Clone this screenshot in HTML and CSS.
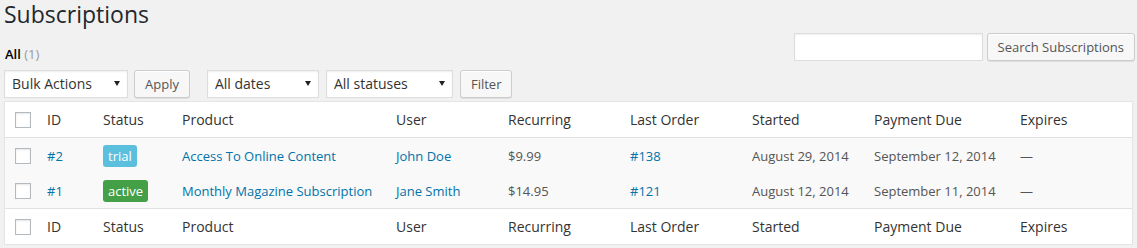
FILE: index.html
```html
<!DOCTYPE html>
<html lang="en">
  <head>
    <meta charset="UTF-8" />
    <title>Subscriptions</title>
    <link rel="stylesheet" href="styles.css">
  </head>
  <body>
    <div class="wrap">
      <h1>Subscriptions</h1>

      <div class="top-row">
        <ul class="subsubsub">
          <li><a href="#" class="current">All <span class="count">(1)</span></a></li>
        </ul>
        <div class="search-box">
          <input type="search" class="search-input" />
          <button class="button">Search Subscriptions</button>
        </div>
      </div>

      <div class="tablenav">
        <div class="actions bulk">
          <label class="select-wrap w-bulk">
            <select><option>Bulk Actions</option></select>
          </label>
          <button class="button">Apply</button>
        </div>
        <div class="actions filters">
          <label class="select-wrap w-dates">
            <select><option>All dates</option></select>
          </label>
          <label class="select-wrap w-status">
            <select><option>All statuses</option></select>
          </label>
          <button class="button">Filter</button>
        </div>
      </div>

      <table class="list-table">
        <colgroup>
          <col class="c-cb" />
          <col class="c-id" />
          <col class="c-status" />
          <col class="c-product" />
          <col class="c-user" />
          <col class="c-recurring" />
          <col class="c-order" />
          <col class="c-started" />
          <col class="c-due" />
          <col />
        </colgroup>
        <thead>
          <tr>
            <th><span class="checkbox"></span></th>
            <th>ID</th>
            <th>Status</th>
            <th>Product</th>
            <th>User</th>
            <th>Recurring</th>
            <th>Last Order</th>
            <th>Started</th>
            <th>Payment Due</th>
            <th>Expires</th>
          </tr>
        </thead>
        <tbody>
          <tr>
            <td><span class="checkbox"></span></td>
            <td><a href="#">#2</a></td>
            <td><span class="badge trial">trial</span></td>
            <td><a href="#">Access To Online Content</a></td>
            <td><a href="#">John Doe</a></td>
            <td>$9.99</td>
            <td><a href="#">#138</a></td>
            <td>August 29, 2014</td>
            <td>September 12, 2014</td>
            <td>&mdash;</td>
          </tr>
          <tr>
            <td><span class="checkbox"></span></td>
            <td><a href="#">#1</a></td>
            <td><span class="badge active">active</span></td>
            <td><a href="#">Monthly Magazine Subscription</a></td>
            <td><a href="#">Jane Smith</a></td>
            <td>$14.95</td>
            <td><a href="#">#121</a></td>
            <td>August 12, 2014</td>
            <td>September 11, 2014</td>
            <td>&mdash;</td>
          </tr>
        </tbody>
        <tfoot>
          <tr>
            <th><span class="checkbox"></span></th>
            <th>ID</th>
            <th>Status</th>
            <th>Product</th>
            <th>User</th>
            <th>Recurring</th>
            <th>Last Order</th>
            <th>Started</th>
            <th>Payment Due</th>
            <th>Expires</th>
          </tr>
        </tfoot>
      </table>
    </div>
  </body>
</html>
```

FILE: styles.css
```css
/* Page */
body {
  margin: 0;
  background-color: #f1f1f1;
  font-family: "Open Sans", sans-serif;
  font-size: 13px;
  color: #444;
}

.wrap {
  padding: 0 4px;
  width: 1129px;
}

h1 {
  margin: 0;
  padding: 0;
  font-size: 23px;
  font-weight: 400;
  line-height: 29px;
  color: #23282d;
}

/* Views + search */
.top-row {
  display: flex;
  justify-content: space-between;
  align-items: flex-start;
  margin-top: 4px;
}

.subsubsub {
  list-style: none;
  margin: 11px 0 0 1px;
  padding: 0;
  line-height: 20px;
}

.subsubsub a {
  text-decoration: none;
  color: #000;
  font-weight: 600;
}

.subsubsub .count {
  color: #999;
  font-weight: 400;
}

.search-box {
  display: flex;
  gap: 4px;
  margin-right: -2px;
}

.search-input {
  width: 189px;
  height: 28px;
  box-sizing: border-box;
  margin: 0;
  border: 1px solid #ddd;
  background: #fff;
  box-shadow: inset 0 1px 2px rgba(0, 0, 0, 0.07);
}

/* Buttons */
.button {
  height: 28px;
  box-sizing: border-box;
  margin: 0;
  padding: 0 10px 1px;
  font-family: "Open Sans", sans-serif;
  font-size: 13px;
  color: #555;
  background: #f7f7f7;
  border: 1px solid #ccc;
  border-radius: 3px;
  box-shadow: inset 0 1px 0 #fff, 0 1px 0 rgba(0, 0, 0, 0.08);
  cursor: pointer;
}

/* Filters row */
.tablenav {
  display: flex;
  align-items: center;
  margin-top: 6px;
  height: 28px;
}

.actions {
  display: flex;
  gap: 6px;
}

.filters {
  margin-left: 17px;
  gap: 7px;
}

.select-wrap {
  position: relative;
  display: block;
  height: 28px;
}

.select-wrap::after {
  content: "";
  position: absolute;
  right: 8px;
  top: 11px;
  border-left: 3px solid transparent;
  border-right: 3px solid transparent;
  border-top: 5px solid #222;
  pointer-events: none;
}

.select-wrap select {
  appearance: none;
  -webkit-appearance: none;
  width: 100%;
  height: 28px;
  margin: 0;
  padding: 0 20px 1px 7px;
  font-family: "Open Sans", sans-serif;
  font-size: 14px;
  color: #333;
  background: #fff;
  border: 1px solid #ddd;
  border-radius: 0;
  box-shadow: inset 0 1px 2px rgba(0, 0, 0, 0.07);
}

.w-bulk { width: 124px; }
.w-dates { width: 112px; }
.w-status { width: 127px; }

/* Table */
.list-table {
  width: 1129px;
  margin-top: 3px;
  table-layout: fixed;
  border-collapse: separate;
  border-spacing: 0;
  background: #fff;
  border: 1px solid #e5e5e5;
  box-shadow: 0 1px 1px rgba(0, 0, 0, 0.04);
}

.c-cb { width: 32px; }
.c-id { width: 56px; }
.c-status { width: 79px; }
.c-product { width: 214px; }
.c-user { width: 112px; }
.c-recurring { width: 122px; }
.c-order { width: 122px; }
.c-started { width: 122px; }
.c-due { width: 146px; }

.list-table th,
.list-table td {
  padding: 0 10px;
  text-align: left;
  white-space: nowrap;
  vertical-align: middle;
}

.list-table th {
  height: 35px;
  font-size: 14px;
  font-weight: 400;
  color: #333;
}

.list-table thead th {
  border-bottom: 1px solid #e1e1e1;
}

.list-table tfoot th {
  border-top: 1px solid #e1e1e1;
}

.list-table tbody tr {
  background: #f9f9f9;
}

.list-table td {
  height: 35px;
  color: #555;
}

.list-table td:first-child,
.list-table th:first-child {
  padding-right: 0;
}

.list-table a {
  color: #0073aa;
  text-decoration: none;
}

.checkbox {
  display: block;
  width: 16px;
  height: 16px;
  box-sizing: border-box;
  background: #fff;
  border: 1px solid #b4b9be;
  box-shadow: inset 0 1px 2px rgba(0, 0, 0, 0.1);
}

/* Status badges */
.badge {
  display: inline-block;
  padding: 0 5px;
  line-height: 22px;
  border-radius: 3px;
  color: #fff;
  font-size: 13px;
}

.badge.trial {
  background: #5bc0de;
}

.badge.active {
  background: #43a047;
}
```
